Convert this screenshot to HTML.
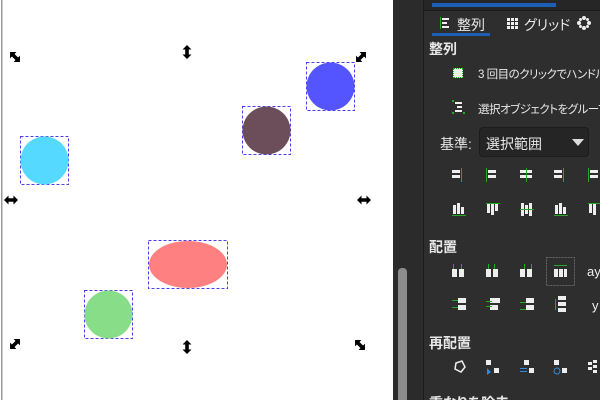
<!DOCTYPE html>
<html style="overflow:hidden"><head><meta charset="utf-8"><style>
html,body{margin:0;width:600px;height:400px;overflow:hidden}
body{background:#2b2b2b;font-family:"Liberation Sans","Noto Sans CJK JP",sans-serif;position:relative}
.a{position:absolute}
.t{color:#e8e8e8;font-size:13px;white-space:nowrap;font-feature-settings:"palt"}
.s{font-size:11.5px;letter-spacing:-0.5px}
#p{position:absolute;left:424px;top:0;width:176px;height:400px;background:#2e2e2e;overflow:hidden}
</style></head><body>
<svg class="a" style="left:0;top:0" width="393" height="400">
<defs><path id="ar" d="M0,-7 L4.5,-2.5 L1.8,-2.5 L1.8,2.5 L4.5,2.5 L0,7 L-4.5,2.5 L-1.8,2.5 L-1.8,-2.5 L-4.5,-2.5 Z" fill="#000"/></defs>
<rect width="393" height="400" fill="#fff"/>
<rect x="1" y="0" width="1.5" height="400" fill="#999"/>
<g fill="none" stroke="#4a3ee8" stroke-dasharray="3,2" stroke-width="1">
<rect x="20.5" y="136.5" width="48" height="48"/>
<rect x="306.5" y="62.5" width="48" height="48"/>
<rect x="242.5" y="106.5" width="48" height="48"/>
<rect x="148.5" y="240.5" width="79" height="48"/>
<rect x="84.5" y="290.5" width="48" height="48"/>
</g>
<circle cx="44.5" cy="160.5" r="24" fill="#55d9ff"/>
<circle cx="330.5" cy="86.5" r="24" fill="#5555ff"/>
<circle cx="266.5" cy="130.5" r="24" fill="#6b4e5a"/>
<ellipse cx="188" cy="264.5" rx="39" ry="23.5" fill="#ff8080"/>
<circle cx="108.5" cy="314.5" r="24" fill="#88dd88"/>
<use href="#ar" transform="translate(15,57) rotate(-45)"/>
<use href="#ar" transform="translate(361,57) rotate(45)"/>
<use href="#ar" transform="translate(15,344) rotate(45)"/>
<use href="#ar" transform="translate(360,345) rotate(-45)"/>
<use href="#ar" transform="translate(187,52)"/>
<use href="#ar" transform="translate(187,347)"/>
<use href="#ar" transform="translate(11,200) rotate(90)"/>
<use href="#ar" transform="translate(364,200) rotate(90)"/>
</svg>
<div class="a" style="left:398px;top:268px;width:9px;height:132px;background:#8c8c8c;border-radius:4px 4px 0 0"></div>
<div class="a" style="left:423px;top:0;width:1px;height:400px;background:#1b1b1b"></div>
<div id="p">
<div class="a" style="left:0;top:0;width:176px;height:10px;background:#262626"></div>
<div class="a" style="left:8px;top:3px;width:124px;height:4px;background:#1d5fb5"></div>
<div class="a" style="left:0;top:10px;width:176px;height:1px;background:#1a1a1a"></div>
<div class="a" style="left:8px;top:33px;width:58px;height:3px;background:#1d5fb5"></div>
<svg class="a" style="left:16px;top:16px" width="160" height="16" fill="#eee">
<rect x="0" y="1" width="1" height="12" fill="#2a2"/><rect x="2" y="2" width="7" height="2"/><rect x="2" y="6" width="5" height="2"/><rect x="2" y="10" width="7" height="2"/>
<g transform="translate(67,2)"><rect x="0" y="0" width="3" height="3"/><rect x="4" y="0" width="3" height="3"/><rect x="8" y="0" width="3" height="3"/><rect x="0" y="4" width="3" height="3"/><rect x="4" y="4" width="3" height="3"/><rect x="8" y="4" width="3" height="3"/><rect x="0" y="8" width="3" height="3"/><rect x="4" y="8" width="3" height="3"/><rect x="8" y="8" width="3" height="3"/></g>
<g transform="translate(144,7)"><circle cx="0" cy="-5" r="2"/><circle cx="5" cy="0" r="2"/><circle cx="0" cy="5" r="2"/><circle cx="-5" cy="0" r="2"/><circle cx="3.5" cy="-3.5" r="1.5"/><circle cx="-3.5" cy="3.5" r="1.5"/><circle cx="3.5" cy="3.5" r="1.5"/><circle cx="-3.5" cy="-3.5" r="1.5"/></g>
</svg>
<div class="a t" style="left:33px;top:15px;font-size:14px">整列</div>
<div class="a t" style="left:100px;top:15px;font-size:14px">グリッド</div>
<div class="a t" style="left:5px;top:39px;font-size:14px;font-weight:bold">整列</div>
<div class="a" style="left:29px;top:68px;width:10px;height:10px;border:1px dotted #2a2;background:#eee;box-sizing:border-box"></div>
<svg class="a" style="left:28px;top:100px" width="14" height="14" fill="#eee"><rect x="3" y="2" width="7" height="2"/><rect x="5" y="6" width="5" height="2"/><rect x="3" y="10" width="7" height="2"/><rect x="0" y="0" width="2" height="2" fill="#2a2"/><rect x="0" y="12" width="2" height="2" fill="#2a2"/><rect x="11" y="12" width="2" height="2" fill="#2a2"/></svg>
<div class="a t s" style="left:54px;top:66px">3 回目のクリックでハンドル</div>
<div class="a t s" style="left:54px;top:101px">選択オブジェクトをグループ</div>
<div class="a t" style="left:16px;top:134px;font-size:14px">基準:</div>
<div class="a" style="left:55px;top:127px;width:110px;height:30px;background:#252525;border:1px solid #1c1c1c;border-radius:4px;box-sizing:border-box"></div>
<div class="a t" style="left:62px;top:134px;font-size:14px">選択範囲</div>
<div class="a" style="left:148px;top:139px;width:0;height:0;border-left:6px solid transparent;border-right:6px solid transparent;border-top:7px solid #ddd"></div>
<svg class="a" style="left:0;top:160px" width="176" height="240" fill="#eee">
<g transform="translate(28,8)"><rect x="0" y="2" width="8" height="3"/><rect x="0" y="7" width="8" height="3"/><rect x="9" y="0" width="1" height="14" fill="#2a2"/></g>
<g transform="translate(62,8)"><rect x="2" y="2" width="8" height="3"/><rect x="2" y="7" width="8" height="3"/><rect x="0" y="0" width="1" height="14" fill="#2a2"/></g>
<g transform="translate(96,8)"><rect x="0" y="2" width="12" height="3"/><rect x="0" y="7" width="12" height="3"/><rect x="6" y="0" width="1" height="14" fill="#2a2"/></g>
<g transform="translate(130,8)"><rect x="0" y="2" width="8" height="3"/><rect x="0" y="7" width="8" height="3"/><rect x="9" y="0" width="1" height="14" fill="#2a2"/></g>
<g transform="translate(164,8)"><rect x="2" y="2" width="8" height="3"/><rect x="2" y="7" width="8" height="3"/><rect x="0" y="0" width="1" height="14" fill="#2a2"/></g>
<g transform="translate(28,43)"><rect x="1" y="2" width="3" height="9"/><rect x="5" y="0" width="3" height="11"/><rect x="9" y="4" width="3" height="7"/><rect x="0" y="12" width="14" height="1" fill="#2a2"/></g>
<g transform="translate(62,43)"><rect x="1" y="1" width="3" height="9"/><rect x="5" y="1" width="3" height="11"/><rect x="9" y="1" width="3" height="7"/><rect x="0" y="0" width="14" height="1" fill="#2a2"/></g>
<g transform="translate(96,43)"><rect x="1" y="0" width="3" height="13"/><rect x="5" y="2" width="3" height="9"/><rect x="9" y="0" width="3" height="13"/><rect x="0" y="6" width="14" height="1" fill="#2a2"/></g>
<g transform="translate(130,43)"><rect x="1" y="2" width="3" height="9"/><rect x="5" y="0" width="3" height="11"/><rect x="9" y="4" width="3" height="7"/><rect x="0" y="12" width="14" height="1" fill="#2a2"/></g>
<g transform="translate(164,43)"><rect x="1" y="1" width="3" height="9"/><rect x="5" y="1" width="3" height="11"/><rect x="0" y="0" width="14" height="1" fill="#2a2"/></g>
<g transform="translate(28,104)"><rect x="0" y="5" width="5" height="8"/><rect x="7" y="5" width="5" height="8"/><rect x="1" y="0" width="1" height="5" fill="#2a2"/><rect x="9" y="0" width="1" height="5" fill="#2a2"/></g>
<g transform="translate(62,104)"><rect x="0" y="5" width="5" height="8"/><rect x="7" y="5" width="5" height="8"/><rect x="2" y="0" width="1" height="5" fill="#2a2"/><rect x="8" y="0" width="1" height="5" fill="#2a2"/></g>
<g transform="translate(96,104)"><rect x="0" y="5" width="5" height="8"/><rect x="7" y="5" width="5" height="8"/><rect x="4" y="0" width="1" height="5" fill="#2a2"/><rect x="11" y="0" width="1" height="5" fill="#2a2"/></g>
<rect x="122.5" y="97.5" width="28" height="28" fill="none" stroke="#666" stroke-dasharray="2,1"/>
<g transform="translate(130,104)"><rect x="0" y="5" width="4" height="8"/><rect x="5" y="5" width="4" height="8"/><rect x="10" y="5" width="3" height="8"/><rect x="0" y="1" width="13" height="1" fill="#2a2"/></g>
<text x="163" y="116" font-size="13" fill="#eee">ay</text>
<g transform="translate(28,138)"><rect x="6" y="0" width="8" height="5"/><rect x="6" y="7" width="8" height="5"/><rect x="0" y="2" width="6" height="1" fill="#2a2"/><rect x="0" y="9" width="6" height="1" fill="#2a2"/></g>
<g transform="translate(62,138)"><rect x="4" y="0" width="10" height="5"/><rect x="4" y="7" width="8" height="5"/><rect x="0" y="3" width="6" height="1" fill="#2a2"/><rect x="0" y="8" width="6" height="1" fill="#2a2"/></g>
<g transform="translate(96,138)"><rect x="6" y="0" width="8" height="5"/><rect x="6" y="7" width="8" height="5"/><rect x="0" y="4" width="6" height="1" fill="#2a2"/><rect x="0" y="11" width="6" height="1" fill="#2a2"/></g>
<g transform="translate(130,136)"><rect x="4" y="0" width="8" height="4"/><rect x="4" y="6" width="8" height="4"/><rect x="4" y="12" width="8" height="4"/><rect x="1" y="3" width="1" height="11" fill="#2a2"/></g>
<text x="168" y="150" font-size="13" fill="#eee">y</text>
<g transform="translate(30,200)" fill="none" stroke="#eee" stroke-width="1.5"><path d="M2 3 L8 1 L11 7 L7 12 L1 9 Z"/></g>
<g transform="translate(62,200)"><rect x="0" y="0" width="5" height="5"/><rect x="8" y="8" width="5" height="5"/><path d="M1 8 L1 15 L5 12 Z" fill="#2a8be0"/></g>
<g transform="translate(96,200)"><rect x="4" y="0" width="5" height="5"/><rect x="9" y="8" width="5" height="5"/><rect x="0" y="8" width="7" height="1" fill="#2a8be0"/><rect x="0" y="11" width="7" height="1" fill="#2a8be0"/></g>
<g transform="translate(130,200)"><rect x="0" y="0" width="5" height="5"/><rect x="8" y="8" width="5" height="5"/><circle cx="3" cy="11" r="3" fill="none" stroke="#2a8be0"/></g>
<g transform="translate(164,200)"><rect x="0" y="2" width="4" height="3"/><rect x="5" y="0" width="4" height="3"/><rect x="0" y="7" width="4" height="3"/><rect x="5" y="5" width="4" height="3"/><rect x="5" y="10" width="4" height="3"/></g>
</svg>
<div class="a t" style="left:5px;top:237px;font-size:14px;font-weight:bold">配置</div>
<div class="a t" style="left:5px;top:333px;font-size:14px;font-weight:bold">再配置</div>
<div class="a t" style="left:5px;top:393px;font-size:14px;font-weight:bold">重なりを除去</div>
</div>
</body></html>
